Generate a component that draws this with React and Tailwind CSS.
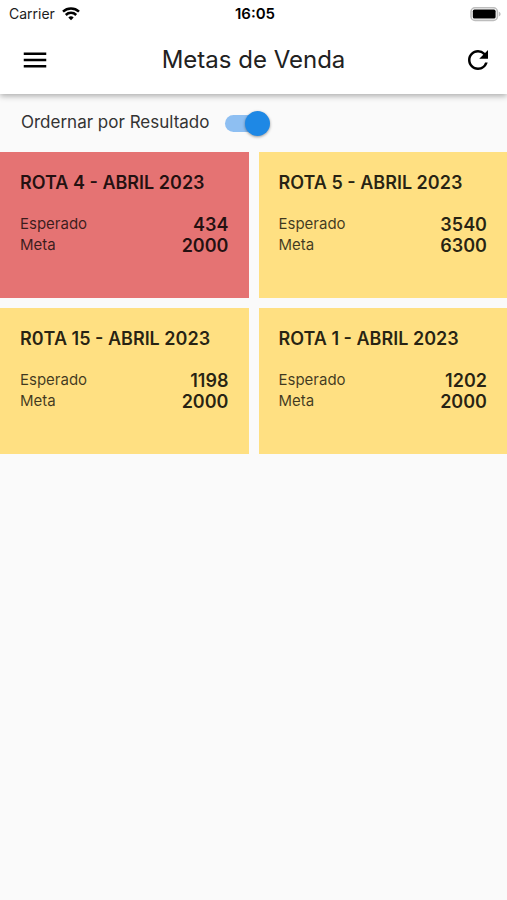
import { useState } from 'react';
import { MdMenu, MdRefresh } from 'react-icons/md';

const metas = [
  { rota: 'ROTA 4 - ABRIL 2023', esperado: 434, meta: 2000, atrasada: true },
  { rota: 'ROTA 5 - ABRIL 2023', esperado: 3540, meta: 6300 },
  { rota: 'R0TA 15 - ABRIL 2023', esperado: 1198, meta: 2000 },
  { rota: 'ROTA 1 - ABRIL 2023', esperado: 1202, meta: 2000 },
];

function WifiIcon() {
  return (
    <svg viewBox="0 0 18 14" className="w-[18px] h-[14px]" fill="none" stroke="black" strokeWidth="2.5">
      <path d="M1 4.6a11.8 11.8 0 0 1 16 0" />
      <path d="M3.8 8a7.4 7.4 0 0 1 10.4 0" />
      <path d="M9 13.2L6.3 10.5a3.8 3.8 0 0 1 5.4 0z" fill="black" stroke="none" />
    </svg>
  );
}

function BatteryIcon() {
  return (
    <svg viewBox="0 0 31 15" className="w-[31px] h-[15px]">
      <rect x="1" y="0.8" width="26.4" height="12.6" rx="4" fill="white" stroke="#bdbdbd" strokeWidth="1.6" />
      <rect x="2.8" y="2.6" width="22.8" height="9" rx="1.6" fill="black" />
      <path d="M28.9 4.8v4.6c1-.4 1.7-1.2 1.7-2.3s-.7-1.9-1.7-2.3z" fill="#bdbdbd" />
    </svg>
  );
}

function StatusBar() {
  return (
    <div className="grid grid-cols-3 items-center h-7 pl-[9px] pr-[6px] text-sm text-[#1c1c1c]">
      <div className="flex items-center gap-[7px]">
        <span>Carrier</span>
        <WifiIcon />
      </div>
      <span className="text-center text-[15px] font-semibold text-black">16:05</span>
      <div className="flex justify-end">
        <BatteryIcon />
      </div>
    </div>
  );
}

function MetaRow({ label, value }) {
  return (
    <div className="flex items-center justify-between h-[21px]">
      <dt className="text-[15px] text-black/75">{label}</dt>
      <dd className="text-lg font-semibold text-black/85">{value}</dd>
    </div>
  );
}

function MetaCard({ rota, esperado, meta, atrasada }) {
  return (
    <article className={`min-h-[146px] px-5 pt-[21px] ${atrasada ? 'bg-[#e57373]' : 'bg-[#ffe082]'}`}>
      <h2 className="text-lg leading-5 font-semibold text-black/85">{rota}</h2>
      <dl className="mt-[21px]">
        <MetaRow label="Esperado" value={esperado} />
        <MetaRow label="Meta" value={meta} />
      </dl>
    </article>
  );
}

export default function App() {
  const [ordenar, setOrdenar] = useState(true);

  return (
    <div className="min-h-screen bg-[#fafafa] font-['Inter',sans-serif]">
      <header className="relative bg-white shadow-[0_2px_6px_rgba(0,0,0,0.32)]">
        <StatusBar />
        <div className="flex items-center justify-between h-[66px] px-[14px] pb-[2px]">
          <button type="button" aria-label="Menu" className="pl-[6px] text-black">
            <MdMenu size={30} />
          </button>
          <h1 className="text-2xl text-[#212121]">Metas de Venda</h1>
          <button type="button" aria-label="Atualizar" className="pl-[6px] text-black">
            <MdRefresh size={30} />
          </button>
        </div>
      </header>

      <main>
        <label className="flex items-center gap-4 h-[58px] px-[21px] text-[17px] text-[#333333]">
          <span>Ordernar por Resultado</span>
          <span className="relative flex items-center w-[45px] h-[26px]">
            <input
              type="checkbox"
              role="switch"
              checked={ordenar}
              onChange={(e) => setOrdenar(e.target.checked)}
              className="peer appearance-none w-[43px] h-[17px] rounded-full bg-gray-400 checked:bg-[#8ebff2]"
            />
            <span className="absolute left-0 size-[25px] rounded-full bg-white shadow-[0_1px_3px_rgba(0,0,0,0.4)] pointer-events-none peer-checked:left-5 peer-checked:bg-[#1e88e5]" />
          </span>
        </label>

        <section className="grid grid-cols-2 gap-[10px]">
          {metas.map((m) => (
            <MetaCard key={m.rota} {...m} />
          ))}
        </section>
      </main>
    </div>
  );
}
